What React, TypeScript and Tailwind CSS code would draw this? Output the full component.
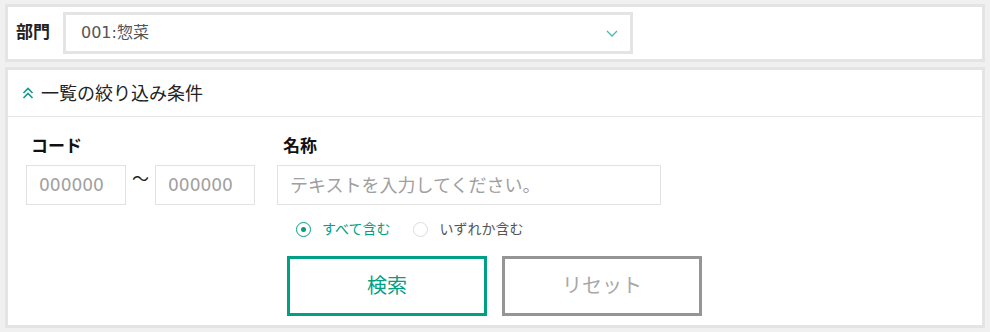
import React, { useState } from 'react';

const font = '"DejaVu Sans", "Noto Sans CJK JP", sans-serif';

const ChevronDown = () => (
  <svg width="12" height="7" viewBox="0 0 12 7" fill="none" className="text-[#4fb9b0]">
    <path d="M1 1l5 5 5-5" stroke="currentColor" strokeWidth="1.3" />
  </svg>
);

const ChevronsUp = () => (
  <svg width="12" height="12" viewBox="0 0 12 12" fill="none" className="text-[#139c8c]">
    <path d="M1.5 6l4.5-4.5 4.5 4.5M1.5 11l4.5-4.5 4.5 4.5" stroke="currentColor" strokeWidth="1.7" />
  </svg>
);

const Radio = ({ checked, label, onClick }: { checked: boolean; label: string; onClick: () => void }) => (
  <button type="button" onClick={onClick} className="flex items-center gap-[11px]">
    <span
      className={`flex h-[15px] w-[15px] items-center justify-center rounded-full border-[1.5px] ${
        checked ? 'border-[#00a084]' : 'border-[#dcdcdc]'
      }`}
    >
      {checked && <span className="h-[5px] w-[5px] rounded-full bg-[#00a084]" />}
    </span>
    <span className={`text-[14px] ${checked ? 'text-[#00a084]' : 'text-[#555]'}`}>{label}</span>
  </button>
);

export default function App() {
  const [mode, setMode] = useState<'all' | 'any'>('all');
  const [open, setOpen] = useState(true);

  return (
    <div className="min-h-[332px] bg-[#f0f0f0] px-[5px] pt-[4px] pb-[4px]" style={{ fontFamily: font }}>
      {/* 部門 */}
      <div className="flex h-[58px] items-start border-[3px] border-[#e4e4e4] bg-white pl-[8px] pt-[5px]">
        <div className="flex h-[42px] items-center">
          <span className="text-[17px] font-bold text-[#222]">部門</span>
        </div>
        <div className="ml-[13px] flex h-[42px] w-[570px] items-center justify-between border-[3px] border-[#e4e4e4] pl-[15px] pr-[12px]">
          <span className="text-[16px] text-[#555]">001:惣菜</span>
          <ChevronDown />
        </div>
      </div>

      {/* 絞り込み条件 */}
      <div className="mt-[5px] h-[261px] border-[3px] border-[#e4e4e4] bg-white">
        <button
          type="button"
          onClick={() => setOpen(!open)}
          className="flex h-[47px] w-full items-center gap-[7px] border-b border-[#e6e6e6] pl-[14px]"
        >
          <ChevronsUp />
          <span className="text-[18px] text-[#222]">一覧の絞り込み条件</span>
        </button>

        {open && (
          <div className="pl-[18px] pt-[17px]">
            <div className="flex">
              <div className="w-[251px]">
                <div className="mb-[7px] h-[24px] pl-[5px] text-[17px] font-bold leading-[24px] text-[#111]">コード</div>
                <div className="flex items-start">
                  <input
                    placeholder="000000"
                    className="h-[40px] w-[100px] border border-[#e2e2e2] pl-[12px] text-[17px] outline-none placeholder:text-[#a0a0a0]"
                  />
                  <span className="mx-[6px] mt-[2px] text-[17px] text-[#222]">～</span>
                  <input
                    placeholder="000000"
                    className="h-[40px] w-[100px] border border-[#e2e2e2] pl-[12px] text-[17px] outline-none placeholder:text-[#a0a0a0]"
                  />
                </div>
              </div>
              <div>
                <div className="mb-[7px] h-[24px] pl-[6px] text-[17px] font-bold leading-[24px] text-[#111]">名称</div>
                <input
                  placeholder="テキストを入力してください。"
                  className="h-[40px] w-[384px] border border-[#e2e2e2] pl-[12px] text-[18px] outline-none placeholder:text-[#a0a0a0]"
                />
                <div className="mt-[14px] flex h-[20px] items-center gap-[23px] pl-[19px]">
                  <Radio checked={mode === 'all'} label="すべて含む" onClick={() => setMode('all')} />
                  <Radio checked={mode === 'any'} label="いずれか含む" onClick={() => setMode('any')} />
                </div>
              </div>
            </div>
            <div className="mt-[17px] flex gap-[15px] pl-[261px]">
              <button
                type="button"
                className="h-[60px] w-[200px] border-[3px] border-[#00a084] text-[20px] text-[#00a084]"
              >
                検索
              </button>
              <button
                type="button"
                className="h-[60px] w-[200px] border-[3px] border-[#959595] text-[20px] text-[#a8a8a8]"
              >
                リセット
              </button>
            </div>
          </div>
        )}
      </div>
    </div>
  );
}
